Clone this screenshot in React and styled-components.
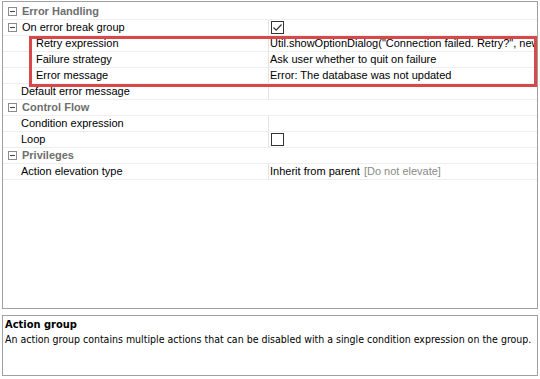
import React from 'react';
import styled, { createGlobalStyle } from 'styled-components';

const Global = createGlobalStyle`
  html, body { margin: 0; padding: 0; background: #fff; }
  body { font-family: Tahoma, "DejaVu Sans", "Liberation Sans", sans-serif; }
`;

const Page = styled.div`
  width: 540px;
  height: 379px;
  box-sizing: border-box;
  padding: 1px 2px 3px 2px;
  display: flex;
  flex-direction: column;
  gap: 6px;
`;

const GridPanel = styled.div`
  position: relative;
  height: 308px;
  box-sizing: border-box;
  border: 1px solid #a0a0a0;
  padding-top: 2px;
`;

const Row = styled.div`
  display: grid;
  grid-template-columns: 265px 1fr;
  height: 16px;
  box-sizing: border-box;
  border-bottom: 1px solid #eeeeee;
  font-family: "Liberation Sans", Arial, sans-serif;
  font-size: 11px;
  line-height: 15px;
  color: #000;
`;

const Label = styled.div`
  display: flex;
  align-items: center;
  padding-left: ${(p) => p.$indent}px;
  white-space: nowrap;
  overflow: hidden;
  color: ${(p) => (p.$category ? '#6e6e6e' : '#000')};
  font-weight: ${(p) => (p.$category ? 'bold' : 'normal')};
`;

const Value = styled.div`
  display: flex;
  align-items: center;
  padding-left: 1px;
  border-left: 1px solid ${(p) => (p.$hidden ? 'transparent' : '#e4e4e4')};
  white-space: nowrap;
  overflow: hidden;
`;

const Muted = styled.span`
  color: #8a8a8a;
  margin-left: 4px;
`;

const Toggle = styled.span`
  width: 9px;
  height: 9px;
  box-sizing: border-box;
  border: 1px solid #8c8c8c;
  margin: 0 5px 0 5px;
  position: relative;
  flex: none;
  &::after {
    content: '';
    position: absolute;
    left: 1px;
    right: 1px;
    top: 3px;
    height: 1px;
    background: #444;
  }
`;

const Box = styled.span`
  width: 13px;
  height: 13px;
  box-sizing: border-box;
  border: 1px solid #333;
  display: inline-flex;
  align-items: center;
  justify-content: center;
  margin-left: ${(p) => p.$offset || 0}px;
`;

const Highlight = styled.div`
  position: absolute;
  left: 26px;
  right: 0;
  top: 34px;
  height: 51px;
  border: 3px solid #d8484a;
  box-sizing: border-box;
  pointer-events: none;
`;

const HelpPanel = styled.div`
  flex: 1;
  box-sizing: border-box;
  border: 1px solid #a0a0a0;
  padding: 1px 2px;
  font-family: "DejaVu Sans Condensed", "DejaVu Sans", sans-serif;
  font-size: 10.5px;
  line-height: 15px;
  color: #000;
  white-space: nowrap;
`;

const HelpTitle = styled.div`
  font-weight: bold;
  font-size: 11px;
`;

const Check = ({ checked, offset }) => (
  <Box $offset={offset}>
    {checked && (
      <svg width="11" height="11" viewBox="0 0 11 11">
        <path d="M1.5 5.5 L4.2 8.2 L9.5 2.5" fill="none" stroke="#333" strokeWidth="1.2" />
      </svg>
    )}
  </Box>
);

const Category = ({ title }) => (
  <Row>
    <Label $category $indent={0}>
      <Toggle />
      {title}
    </Label>
    <Value $hidden />
  </Row>
);

const Prop = ({ label, indent = 18, children }) => (
  <Row>
    <Label $indent={indent}>{label}</Label>
    <Value>{children}</Value>
  </Row>
);

export default function App() {
  return (
    <>
      <Global />
      <Page>
        <GridPanel>
          <Category title="Error Handling" />
          <Row>
            <Label $indent={0}>
              <Toggle />
              On error break group
            </Label>
            <Value>
              <Check checked offset={1} />
            </Value>
          </Row>
          <Prop label="Retry expression" indent={33}>
            Util.showOptionDialog("Connection failed. Retry?", new
          </Prop>
          <Prop label="Failure strategy" indent={33}>
            Ask user whether to quit on failure
          </Prop>
          <Prop label="Error message" indent={33}>
            Error: The database was not updated
          </Prop>
          <Prop label="Default error message" />
          <Category title="Control Flow" />
          <Prop label="Condition expression" />
          <Prop label="Loop">
            <Check offset={1} />
          </Prop>
          <Category title="Privileges" />
          <Prop label="Action elevation type">
            Inherit from parent<Muted>[Do not elevate]</Muted>
          </Prop>
          <Highlight />
        </GridPanel>
        <HelpPanel>
          <HelpTitle>Action group</HelpTitle>
          An action group contains multiple actions that can be disabled with a single condition expression on the group.
        </HelpPanel>
      </Page>
    </>
  );
}
